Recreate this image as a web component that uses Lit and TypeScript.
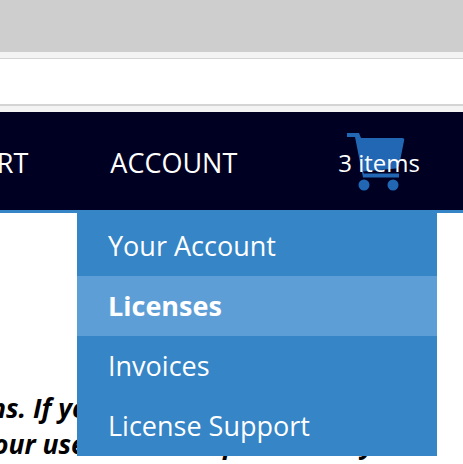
import { LitElement, html, css } from 'lit';
import { customElement } from 'lit/decorators.js';

@customElement('account-menu')
export class AccountMenu extends LitElement {
  static styles = css`
    :host {
      display: block;
      position: absolute;
      left: 77px;
      top: 210px;
      width: 360px;
      padding-top: 6px;
      background: #3585c7;
    }

    a {
      display: block;
      height: 60px;
      padding-left: 31px;
      font-size: 27px;
      line-height: 60px;
      color: #fff;
    }

    a.active {
      background: #5e9ed6;
      font-weight: 700;
    }
  `;

  render() {
    return html`
      <a>Your Account</a>
      <a class="active">Licenses</a>
      <a>Invoices</a>
      <a>License Support</a>
    `;
  }
}

@customElement('app-root')
export class AppRoot extends LitElement {
  static styles = css`
    :host {
      display: block;
      position: relative;
      height: 464px;
      overflow: hidden;
      font-family: 'Open Sans', sans-serif;
      background: #fff;
    }

    .top {
      height: 52px;
      background: #cecece;
    }

    .bar {
      height: 60px;
      padding: 6px 0;
      box-sizing: border-box;
      background: #f3f3f3;
    }

    .field {
      height: 48px;
      box-sizing: border-box;
      background: #fff;
      border-top: 1px solid #d4d4d4;
      border-bottom: 2px solid #d4d4d4;
    }

    nav {
      display: flex;
      justify-content: flex-end;
      align-items: center;
      gap: 101px;
      height: 101px;
      box-sizing: border-box;
      padding: 2px 43px 0 0;
      background: #000022;
      border-bottom: 3px solid #3585c7;
      color: #fff;
      font-size: 27px;
    }

    .port {
      margin-right: -19px;
    }

    .cart {
      position: relative;
      font-size: 24px;
      white-space: nowrap;
    }

    .cart svg {
      position: absolute;
      left: 9px;
      top: -13px;
      width: 60px;
      height: 60px;
    }

    .cart span {
      position: relative;
    }

    .copy {
      margin: 0;
      padding-top: 177px;
      font-size: 26.5px;
      line-height: 36px;
      font-weight: 700;
      font-style: italic;
      color: #000;
      white-space: nowrap;
    }

    .line-one {
      margin-left: -10px;
    }

    .line-two {
      margin-left: -7px;
    }

    .copy div {
      display: block;
    }
  `;

  render() {
    return html`
      <div class="top"></div>
      <div class="bar"><div class="field"></div></div>
      <nav>
        <span class="port">SUPPORT</span>
        <span class="account">ACCOUNT</span>
        <div class="cart">
          <svg viewBox="0 0 60 60" fill="#2167b3">
            <path
              d="M0 0h12l2 5h41q3 0 2 3l-5 25q-1 2-3 2.500l-33 3 1 2h35v4H16L8 4H0z"
            />
            <circle cx="17" cy="52" r="5.500" />
            <circle cx="46" cy="52" r="5.500" />
          </svg>
          <span>3 items</span>
        </div>
      </nav>
      <div class="copy">
        <div class="line-one">ns. If you have any active plans</div>
        <div class="line-two">our users need help with a key</div>
      </div>
      <account-menu></account-menu>
    `;
  }
}
